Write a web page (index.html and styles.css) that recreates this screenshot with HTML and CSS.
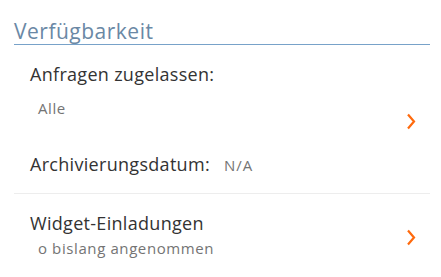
FILE: index.html
```html
<!doctype html>
<html lang="de">

<head>
    <meta charset="UTF-8">
    <meta name="viewport" content="width=device-width, initial-scale=1.0">
    <title>Verfügbarkeit</title>
    <link rel="stylesheet" href="styles.css">
</head>

<body>
    <section class="panel">
        <h2 class="panel--title">Verfügbarkeit</h2>

        <div class="item item--link item--requests">
            <div class="item--body">
                <div class="item--label">Anfragen zugelassen:</div>
                <div class="item--value">Alle</div>
            </div>
            <svg class="chevron" width="10" height="17" viewBox="0 0 10 17">
                <path d="M2 1.5 L8 8.5 L2 15.5" fill="none" stroke="#ff6a0d" stroke-width="2.2" />
            </svg>
        </div>

        <div class="item item--inline">
            <span class="item--label">Archivierungsdatum:</span>
            <span class="item--value">N/A</span>
        </div>

        <div class="item item--link item--widgets">
            <div class="item--body">
                <div class="item--label">Widget-Einladungen</div>
                <div class="item--value">o bislang angenommen</div>
            </div>
            <svg class="chevron" width="10" height="17" viewBox="0 0 10 17">
                <path d="M2 1.5 L8 8.5 L2 15.5" fill="none" stroke="#ff6a0d" stroke-width="2.2" />
            </svg>
        </div>
    </section>
</body>

</html>
```

FILE: styles.css
```css
body {
    margin: 0;
    font-family: "Open Sans", "Lato", sans-serif;
    background: #ffffff;
    color: #333333;
}

.panel {
    padding: 19px 11px 0 14px;
}

.panel--title {
    margin: 0;
    font-size: 21px;
    font-weight: 400;
    line-height: 25px;
    letter-spacing: 0.5px;
    color: #6a88a5;
    border-bottom: 1px solid #78a2c9;
}

.item {
    padding-left: 16px;
    padding-right: 14px;
}

.item--link {
    display: flex;
    align-items: flex-start;
    justify-content: space-between;
    cursor: pointer;
}

.item--label {
    font-size: 18px;
    line-height: 22px;
    letter-spacing: 0.3px;
    color: #333333;
}

.item--value {
    font-size: 15px;
    line-height: 20px;
    letter-spacing: 0.6px;
    color: #747474;
    padding-left: 8px;
}

.item--requests {
    padding-top: 18px;
}

.item--requests .item--value {
    margin-top: 13px;
}

.item--requests .chevron {
    margin-top: 50px;
}

.item--inline {
    display: flex;
    align-items: baseline;
    padding-top: 23px;
    padding-bottom: 18px;
}

.item--inline .item--value {
    padding-left: 14px;
    letter-spacing: 1px;
}

.item--widgets {
    border-top: 1px solid #ededed;
    padding-top: 18px;
}

.item--widgets .item--value {
    margin-top: 4px;
}

.item--widgets .chevron {
    margin-top: 17px;
}
```
